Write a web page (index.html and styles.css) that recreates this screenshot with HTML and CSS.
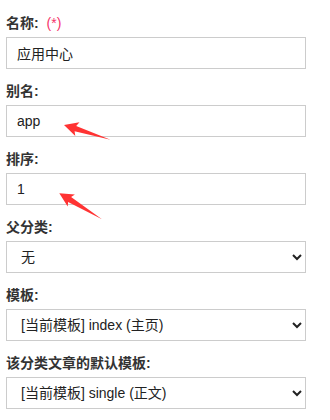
FILE: index.html
```html
<!DOCTYPE html>
<html lang="zh">
<head>
<meta charset="utf-8">
<link rel="stylesheet" href="styles.css">
</head>
<body>
<form class="form">
  <div class="group">
    <label class="label">名称: <span class="req">(*)</span></label>
    <input class="field" type="text" value="应用中心">
  </div>
  <div class="group">
    <label class="label">别名:</label>
    <input class="field" type="text" value="app">
  </div>
  <div class="group">
    <label class="label">排序:</label>
    <input class="field" type="text" value="1">
  </div>
  <div class="group">
    <label class="label">父分类:</label>
    <select class="field select"><option>无</option></select>
  </div>
  <div class="group">
    <label class="label">模板:</label>
    <select class="field select"><option>[当前模板] index (主页)</option></select>
  </div>
  <div class="group">
    <label class="label">该分类文章的默认模板:</label>
    <select class="field select"><option>[当前模板] single (正文)</option></select>
  </div>
</form>
<svg class="arrows" width="330" height="420" viewBox="0 0 330 420">
  <polygon points="64,125 79.5,122.3 76.2,125.9 110.5,139.7 74.6,131.3 75.3,136" fill="#ff3333"/>
  <polygon points="59.3,193.3 74.9,194.6 71.1,197.1 102,219.3 68.1,201.9 67.7,206.6" fill="#ff3333"/>
</svg>
</body>
</html>
```

FILE: styles.css
```css
html, body {
  margin: 0;
  padding: 0;
  background: #fff;
}
body {
  font-family: "Liberation Sans", Arial, "Noto Sans CJK SC", sans-serif;
  font-size: 14px;
  color: #333;
  position: relative;
  width: 330px;
  height: 420px;
  overflow: hidden;
}
.form {
  width: 300px;
  padding: 13px 0 0 6px;
  margin: 0;
}
.group {
  display: flex;
  flex-direction: column;
  gap: 4px;
  margin-bottom: 12px;
}
.label {
  font-weight: bold;
  line-height: 20px;
  color: #333;
}
.req {
  font-weight: normal;
  color: #f5346a;
  margin-left: 4px;
}
.field {
  box-sizing: border-box;
  width: 300px;
  height: 32px;
  margin: 0;
  border: 1px solid #ccc;
  border-radius: 0;
  background: #fff;
  font-family: "Liberation Sans", Arial, "Noto Sans CJK SC", sans-serif;
  font-size: 14px;
  color: #222;
  padding: 0 10px;
  outline: none;
}
.select {
  padding: 0 8px 0 10px;
}
.arrows {
  position: absolute;
  left: 0;
  top: 0;
  pointer-events: none;
}
```
